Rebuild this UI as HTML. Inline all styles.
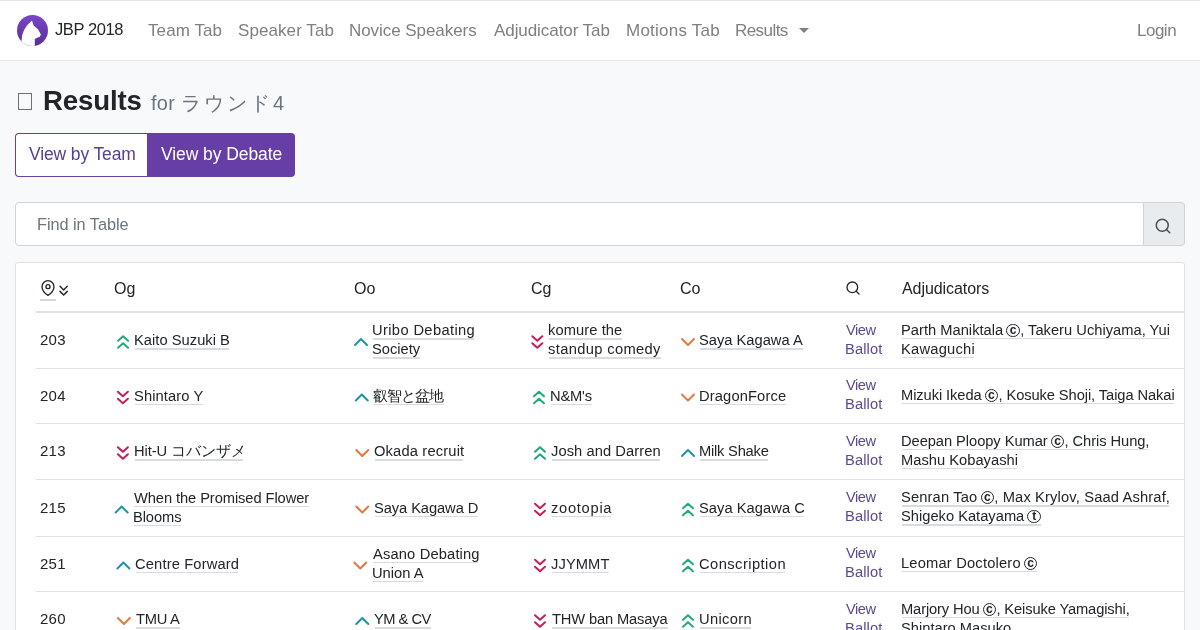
<!DOCTYPE html>
<html><head><meta charset="utf-8"><style>
html,body{margin:0;padding:0;}
body{width:1200px;height:630px;overflow:hidden;position:relative;background:#f8f9fa;font-family:"Liberation Sans", sans-serif;}
.t{position:absolute;white-space:nowrap;will-change:transform;}
.cc{display:inline-block;box-sizing:border-box;width:13.4px;height:13.4px;border:1.6px solid currentColor;border-radius:50%;font-size:12px;font-weight:700;line-height:10.2px;text-align:center;vertical-align:1px;margin:0 0.3px 0 3.2px;letter-spacing:0}
</style></head><body>
<div style="position:absolute;left:0px;top:0px;width:1200px;height:1px;background:#e3e3e3"></div><div style="position:absolute;left:0px;top:1px;width:1200px;height:59px;background:#fff"></div><div style="position:absolute;left:0px;top:60px;width:1200px;height:1px;background:#e6e6e6"></div><svg style="position:absolute;left:17px;top:14.5px;" width="31" height="31" viewBox="0 0 31 31" fill="none" stroke-linecap="round" stroke-linejoin="round"><defs><linearGradient id="lg" x1="0" y1="0" x2="0" y2="1"><stop offset="0" stop-color="#7b46c9"/><stop offset="1" stop-color="#5a2e98"/></linearGradient><clipPath id="cp"><circle cx="15.5" cy="15.5" r="15.5"/></clipPath></defs><circle cx="15.5" cy="15.5" r="15.5" fill="url(#lg)" stroke="none"/><path clip-path="url(#cp)" fill="#fff" stroke="none" d="M15 5.6 L16.6 10.6 L21 14.2 L23.9 19.4 L22.8 21.8 L19.6 23 L17.8 24 L17.8 32 L4 32 L4.4 26 Q5 13.5 15 5.6 Z"/></svg><div class="t" style="left:54.70px;top:18.80px;font-size:16.5px;line-height:20.62px;color:#212529;letter-spacing:-0.4px;">JBP 2018</div><div class="t" style="left:148.00px;top:19.80px;font-size:17px;line-height:21.25px;color:#7f7f7f;letter-spacing:0.086px;">Team Tab</div><div class="t" style="left:237.50px;top:19.80px;font-size:17px;line-height:21.25px;color:#7f7f7f;letter-spacing:0.08px;">Speaker Tab</div><div class="t" style="left:349.40px;top:19.80px;font-size:17px;line-height:21.25px;color:#7f7f7f;letter-spacing:-0.057px;">Novice Speakers</div><div class="t" style="left:493.80px;top:19.80px;font-size:17px;line-height:21.25px;color:#7f7f7f;letter-spacing:-0.072px;">Adjudicator Tab</div><div class="t" style="left:625.80px;top:19.80px;font-size:17px;line-height:21.25px;color:#7f7f7f;letter-spacing:0.24px;">Motions Tab</div><div class="t" style="left:735.00px;top:19.80px;font-size:17px;line-height:21.25px;color:#7f7f7f;letter-spacing:-0.566px;">Results</div><svg style="position:absolute;left:798.5px;top:28px;" width="10" height="5" viewBox="0 0 10 5" fill="none" stroke-linecap="round" stroke-linejoin="round"><path d="M0 0 L5 5 L10 0 Z" fill="#7f7f7f" stroke="none"/></svg><div class="t" style="left:1137.00px;top:20.20px;font-size:17px;line-height:21.25px;color:#7f7f7f;letter-spacing:-0.5px;">Login</div><div style="position:absolute;left:18px;top:93px;width:14px;height:17px;border:1px solid #707070;box-sizing:border-box"></div><div class="t" style="left:43.40px;top:84.00px;font-size:27.6px;line-height:34.5px;color:#212529;font-weight:700;letter-spacing:-0.134px;">Results</div><div class="t" style="left:150.70px;top:90.70px;font-size:20px;line-height:25.0px;color:#6c757d;letter-spacing:0.3px;">for</div><div class="t" style="left:181.00px;top:90.70px;font-size:20px;line-height:25.0px;color:#6c757d;letter-spacing:3.0px;">ラウンド4</div><div style="position:absolute;left:15px;top:133px;width:132px;height:44px;box-sizing:border-box;border:1px solid #663ea6;border-right:none;border-radius:4px 0 0 4px;background:#fff"></div><div style="position:absolute;left:147px;top:133px;width:148px;height:44px;background:#663ea6;border-radius:0 4px 4px 0"></div><div class="t" style="left:28.75px;top:143.50px;font-size:17.5px;line-height:21.88px;color:#573e93;letter-spacing:-0.136px;">View by Team</div><div class="t" style="left:161.00px;top:143.50px;font-size:17.5px;line-height:21.88px;color:#fff;letter-spacing:-0.077px;">View by Debate</div><div style="position:absolute;left:15px;top:202px;width:1170px;height:44px;box-sizing:border-box;border:1px solid #ced4da;border-radius:4px;background:#fff"></div><div style="position:absolute;left:1143px;top:202px;width:42px;height:44px;box-sizing:border-box;border:1px solid #ced4da;border-radius:0 4px 4px 0;background:#e9ecef"></div><div class="t" style="left:36.70px;top:214.00px;font-size:16.3px;line-height:20.38px;color:#6c757d;letter-spacing:-0.033px;">Find in Table</div><svg style="position:absolute;left:1153.5px;top:217.4px;" width="18" height="18" viewBox="0 0 24 24" fill="none" stroke-linecap="round" stroke-linejoin="round"><g stroke="#495057" stroke-width="2"><circle cx="11" cy="11" r="8"/><line x1="21" y1="21" x2="16.65" y2="16.65"/></g></svg><div style="position:absolute;left:15px;top:262px;width:1170px;height:400px;box-sizing:border-box;border:1px solid #dfe2e5;border-radius:3px;background:#fff"></div><div style="position:absolute;left:36px;top:311px;width:1148px;height:2px;background:#dee2e6"></div><svg style="position:absolute;left:40.1px;top:280px;" width="16" height="16" viewBox="0 0 24 24" fill="none" stroke-linecap="round" stroke-linejoin="round"><g stroke="#212529" stroke-width="2"><path d="M21 10c0 7-9 13-9 13s-9-6-9-13a9 9 0 0 1 18 0z"/><circle cx="12" cy="10" r="3"/></g></svg><div style="position:absolute;left:40px;top:299px;width:16px;height:2px;background:#d6d8db"></div><svg style="position:absolute;left:54.7px;top:281.6px;" width="17.3" height="17.3" viewBox="0 0 24 24" fill="none" stroke-linecap="round" stroke-linejoin="round"><g stroke="#212529" stroke-width="2"><polyline points="7 13 12 18 17 13"/><polyline points="7 6 12 11 17 6"/></g></svg><div class="t" style="left:114.40px;top:278.80px;font-size:16px;line-height:20.0px;color:#212529;">Og</div><div class="t" style="left:353.50px;top:278.80px;font-size:16px;line-height:20.0px;color:#212529;">Oo</div><div class="t" style="left:530.50px;top:278.80px;font-size:16px;line-height:20.0px;color:#212529;">Cg</div><div class="t" style="left:679.50px;top:278.80px;font-size:16px;line-height:20.0px;color:#212529;">Co</div><div class="t" style="left:902.20px;top:279.00px;font-size:16px;line-height:20.0px;color:#212529;letter-spacing:-0.073px;">Adjudicators</div><svg style="position:absolute;left:844.7px;top:279.7px;" width="16" height="16" viewBox="0 0 24 24" fill="none" stroke-linecap="round" stroke-linejoin="round"><g stroke="#212529" stroke-width="2"><circle cx="11" cy="11" r="8"/><line x1="21" y1="21" x2="16.65" y2="16.65"/></g></svg><div style="position:absolute;left:36px;top:368px;width:1148px;height:1px;background:#dee2e6"></div><div style="position:absolute;left:36px;top:423px;width:1148px;height:1px;background:#dee2e6"></div><div style="position:absolute;left:36px;top:479px;width:1148px;height:1px;background:#dee2e6"></div><div style="position:absolute;left:36px;top:536px;width:1148px;height:1px;background:#dee2e6"></div><div style="position:absolute;left:36px;top:591px;width:1148px;height:1px;background:#dee2e6"></div><div class="t" style="left:40.25px;top:331.00px;font-size:15px;line-height:18.75px;color:#212529;letter-spacing:0.25px;">203</div><div class="t" style="left:134.20px;top:331.00px;font-size:14.7px;line-height:18.38px;color:#212529;letter-spacing:0.03px;">Kaito Suzuki B</div><div style="position:absolute;left:135.20px;top:348.20px;width:94.20px;height:1.4px;background:#d9dbde"></div><div class="t" style="left:372.20px;top:321.00px;font-size:14.7px;line-height:18.38px;color:#212529;letter-spacing:0.369px;">Uribo Debating</div><div style="position:absolute;left:373.20px;top:338.20px;width:100.40px;height:1.4px;background:#d9dbde"></div><div class="t" style="left:372.20px;top:340.00px;font-size:14.7px;line-height:18.38px;color:#212529;">Society</div><div style="position:absolute;left:373.20px;top:357.20px;width:47.00px;height:1.4px;background:#d9dbde"></div><div class="t" style="left:548.30px;top:321.00px;font-size:14.7px;line-height:18.38px;color:#212529;letter-spacing:0.089px;">komure the</div><div style="position:absolute;left:549.30px;top:338.20px;width:72.90px;height:1.4px;background:#d9dbde"></div><div class="t" style="left:548.30px;top:340.00px;font-size:14.7px;line-height:18.38px;color:#212529;letter-spacing:0.354px;">standup comedy</div><div style="position:absolute;left:549.30px;top:357.20px;width:111.30px;height:1.4px;background:#d9dbde"></div><div class="t" style="left:699.00px;top:331.00px;font-size:14.7px;line-height:18.38px;color:#212529;">Saya Kagawa A</div><div style="position:absolute;left:700.00px;top:348.20px;width:102.50px;height:1.4px;background:#d9dbde"></div><div class="t" style="left:845.70px;top:320.60px;font-size:14.7px;line-height:18.38px;color:#5b4993;letter-spacing:-0.467px;">View</div><div class="t" style="left:844.70px;top:339.80px;font-size:14.7px;line-height:18.38px;color:#5b4993;letter-spacing:0.12px;">Ballot</div><div class="t" style="left:901.00px;top:320.60px;font-size:14.7px;line-height:18.38px;color:#212529;letter-spacing:0.013px;">Parth Maniktala<span class="cc">c</span>, Takeru Uchiyama, Yui</div><div style="position:absolute;left:902.00px;top:337.80px;width:266.75px;height:1.4px;background:#d9dbde"></div><div class="t" style="left:901.00px;top:339.60px;font-size:14.7px;line-height:18.38px;color:#212529;letter-spacing:0.224px;">Kawaguchi</div><div style="position:absolute;left:902.00px;top:356.80px;width:71.90px;height:1.4px;background:#d9dbde"></div><div class="t" style="left:40.25px;top:386.50px;font-size:15px;line-height:18.75px;color:#212529;letter-spacing:0.25px;">204</div><div class="t" style="left:134.00px;top:386.50px;font-size:14.7px;line-height:18.38px;color:#212529;letter-spacing:0.111px;">Shintaro Y</div><div style="position:absolute;left:135.00px;top:403.70px;width:68.00px;height:1.4px;background:#d9dbde"></div><div class="t" style="left:373.00px;top:386.50px;font-size:14.7px;line-height:18.38px;color:#212529;letter-spacing:-1.0px;">叡智と盆地</div><div style="position:absolute;left:374.00px;top:403.70px;width:70.00px;height:1.4px;background:#d9dbde"></div><div class="t" style="left:550.00px;top:386.50px;font-size:14.7px;line-height:18.38px;color:#212529;letter-spacing:-0.2px;">N&amp;M's</div><div style="position:absolute;left:551.00px;top:403.70px;width:40.60px;height:1.4px;background:#d9dbde"></div><div class="t" style="left:699.00px;top:386.50px;font-size:14.7px;line-height:18.38px;color:#212529;letter-spacing:0.14px;">DragonForce</div><div style="position:absolute;left:700.00px;top:403.70px;width:85.70px;height:1.4px;background:#d9dbde"></div><div class="t" style="left:845.70px;top:376.10px;font-size:14.7px;line-height:18.38px;color:#5b4993;letter-spacing:-0.467px;">View</div><div class="t" style="left:844.70px;top:395.30px;font-size:14.7px;line-height:18.38px;color:#5b4993;letter-spacing:0.12px;">Ballot</div><div class="t" style="left:901.00px;top:385.70px;font-size:14.7px;line-height:18.38px;color:#212529;letter-spacing:-0.089px;">Mizuki Ikeda<span class="cc">c</span>, Kosuke Shoji, Taiga Nakai</div><div style="position:absolute;left:902.00px;top:402.90px;width:271.75px;height:1.4px;background:#d9dbde"></div><div class="t" style="left:40.25px;top:442.00px;font-size:15px;line-height:18.75px;color:#212529;letter-spacing:0.25px;">213</div><div class="t" style="left:134.00px;top:442.00px;font-size:14.7px;line-height:18.38px;color:#212529;letter-spacing:-0.1px;">Hit-U コバンザメ</div><div style="position:absolute;left:135.00px;top:459.20px;width:108.00px;height:1.4px;background:#d9dbde"></div><div class="t" style="left:373.50px;top:442.00px;font-size:14.7px;line-height:18.38px;color:#212529;letter-spacing:0.167px;">Okada recruit</div><div style="position:absolute;left:374.50px;top:459.20px;width:88.50px;height:1.4px;background:#d9dbde"></div><div class="t" style="left:551.00px;top:442.00px;font-size:14.7px;line-height:18.38px;color:#212529;letter-spacing:0.072px;">Josh and Darren</div><div style="position:absolute;left:552.00px;top:459.20px;width:107.50px;height:1.4px;background:#d9dbde"></div><div class="t" style="left:699.00px;top:442.00px;font-size:14.7px;line-height:18.38px;color:#212529;letter-spacing:-0.222px;">Milk Shake</div><div style="position:absolute;left:700.00px;top:459.20px;width:68.00px;height:1.4px;background:#d9dbde"></div><div class="t" style="left:845.70px;top:431.60px;font-size:14.7px;line-height:18.38px;color:#5b4993;letter-spacing:-0.467px;">View</div><div class="t" style="left:844.70px;top:450.80px;font-size:14.7px;line-height:18.38px;color:#5b4993;letter-spacing:0.12px;">Ballot</div><div class="t" style="left:901.00px;top:431.60px;font-size:14.7px;line-height:18.38px;color:#212529;letter-spacing:-0.062px;">Deepan Ploopy Kumar<span class="cc">c</span>, Chris Hung,</div><div style="position:absolute;left:902.00px;top:448.80px;width:246.00px;height:1.4px;background:#d9dbde"></div><div class="t" style="left:901.00px;top:450.60px;font-size:14.7px;line-height:18.38px;color:#212529;letter-spacing:0.014px;">Mashu Kobayashi</div><div style="position:absolute;left:902.00px;top:467.80px;width:114.60px;height:1.4px;background:#d9dbde"></div><div class="t" style="left:40.25px;top:498.50px;font-size:15px;line-height:18.75px;color:#212529;letter-spacing:0.25px;">215</div><div class="t" style="left:133.75px;top:488.50px;font-size:14.7px;line-height:18.38px;color:#212529;letter-spacing:-0.087px;">When the Promised Flower</div><div style="position:absolute;left:133.75px;top:505.70px;width:175.00px;height:1.4px;background:#d9dbde"></div><div class="t" style="left:132.75px;top:507.50px;font-size:14.7px;line-height:18.38px;color:#212529;letter-spacing:-0.1px;">Blooms</div><div style="position:absolute;left:133.75px;top:524.70px;width:46.75px;height:1.4px;background:#d9dbde"></div><div class="t" style="left:373.50px;top:498.50px;font-size:14.7px;line-height:18.38px;color:#212529;letter-spacing:-0.083px;">Saya Kagawa D</div><div style="position:absolute;left:374.50px;top:515.70px;width:103.00px;height:1.4px;background:#d9dbde"></div><div class="t" style="left:551.00px;top:498.50px;font-size:14.7px;line-height:18.38px;color:#212529;letter-spacing:0.714px;">zootopia</div><div style="position:absolute;left:552.00px;top:515.70px;width:59.00px;height:1.4px;background:#d9dbde"></div><div class="t" style="left:699.00px;top:498.50px;font-size:14.7px;line-height:18.38px;color:#212529;letter-spacing:0.041px;">Saya Kagawa C</div><div style="position:absolute;left:700.00px;top:515.70px;width:103.75px;height:1.4px;background:#d9dbde"></div><div class="t" style="left:845.70px;top:488.10px;font-size:14.7px;line-height:18.38px;color:#5b4993;letter-spacing:-0.467px;">View</div><div class="t" style="left:844.70px;top:507.30px;font-size:14.7px;line-height:18.38px;color:#5b4993;letter-spacing:0.12px;">Ballot</div><div class="t" style="left:901.00px;top:488.10px;font-size:14.7px;line-height:18.38px;color:#212529;letter-spacing:0.15px;">Senran Tao<span class="cc">c</span>, Max Krylov, Saad Ashraf,</div><div style="position:absolute;left:902.00px;top:505.30px;width:266.70px;height:1.4px;background:#d9dbde"></div><div class="t" style="left:901.00px;top:507.10px;font-size:14.7px;line-height:18.38px;color:#212529;">Shigeko Katayama<span class="cc">t</span></div><div style="position:absolute;left:902.00px;top:524.30px;width:139.00px;height:1.4px;background:#d9dbde"></div><div class="t" style="left:40.25px;top:554.50px;font-size:15px;line-height:18.75px;color:#212529;letter-spacing:0.25px;">251</div><div class="t" style="left:134.50px;top:554.50px;font-size:14.7px;line-height:18.38px;color:#212529;letter-spacing:0.154px;">Centre Forward</div><div style="position:absolute;left:135.50px;top:571.70px;width:102.00px;height:1.4px;background:#d9dbde"></div><div class="t" style="left:372.50px;top:544.50px;font-size:14.7px;line-height:18.38px;color:#212529;letter-spacing:0.154px;">Asano Debating</div><div style="position:absolute;left:372.50px;top:561.70px;width:105.00px;height:1.4px;background:#d9dbde"></div><div class="t" style="left:371.50px;top:563.50px;font-size:14.7px;line-height:18.38px;color:#212529;">Union A</div><div style="position:absolute;left:372.50px;top:580.70px;width:50.00px;height:1.4px;background:#d9dbde"></div><div class="t" style="left:551.00px;top:554.50px;font-size:14.7px;line-height:18.38px;color:#212529;letter-spacing:0.1px;">JJYMMT</div><div style="position:absolute;left:552.00px;top:571.70px;width:56.75px;height:1.4px;background:#d9dbde"></div><div class="t" style="left:699.00px;top:554.50px;font-size:14.7px;line-height:18.38px;color:#212529;letter-spacing:0.454px;">Conscription</div><div style="position:absolute;left:700.00px;top:571.70px;width:84.50px;height:1.4px;background:#d9dbde"></div><div class="t" style="left:845.70px;top:544.10px;font-size:14.7px;line-height:18.38px;color:#5b4993;letter-spacing:-0.467px;">View</div><div class="t" style="left:844.70px;top:563.30px;font-size:14.7px;line-height:18.38px;color:#5b4993;letter-spacing:0.12px;">Ballot</div><div class="t" style="left:901.00px;top:553.70px;font-size:14.7px;line-height:18.38px;color:#212529;letter-spacing:0.188px;">Leomar Doctolero<span class="cc">c</span></div><div style="position:absolute;left:902.00px;top:570.90px;width:135.00px;height:1.4px;background:#d9dbde"></div><div class="t" style="left:40.25px;top:610.00px;font-size:15px;line-height:18.75px;color:#212529;letter-spacing:0.25px;">260</div><div class="t" style="left:136.00px;top:610.00px;font-size:14.7px;line-height:18.38px;color:#212529;letter-spacing:-0.25px;">TMU A</div><div style="position:absolute;left:136.00px;top:627.20px;width:44.00px;height:1.4px;background:#d9dbde"></div><div class="t" style="left:373.50px;top:610.00px;font-size:14.7px;line-height:18.38px;color:#212529;letter-spacing:-0.5px;">YM &amp; CV</div><div style="position:absolute;left:374.50px;top:627.20px;width:56.00px;height:1.4px;background:#d9dbde"></div><div class="t" style="left:552.00px;top:610.00px;font-size:14.7px;line-height:18.38px;color:#212529;letter-spacing:-0.153px;">THW ban Masaya</div><div style="position:absolute;left:552.00px;top:627.20px;width:115.50px;height:1.4px;background:#d9dbde"></div><div class="t" style="left:699.00px;top:610.00px;font-size:14.7px;line-height:18.38px;color:#212529;letter-spacing:0.333px;">Unicorn</div><div style="position:absolute;left:700.00px;top:627.20px;width:50.50px;height:1.4px;background:#d9dbde"></div><div class="t" style="left:845.70px;top:599.60px;font-size:14.7px;line-height:18.38px;color:#5b4993;letter-spacing:-0.467px;">View</div><div class="t" style="left:844.70px;top:618.80px;font-size:14.7px;line-height:18.38px;color:#5b4993;letter-spacing:0.12px;">Ballot</div><div class="t" style="left:901.00px;top:599.60px;font-size:14.7px;line-height:18.38px;color:#212529;letter-spacing:-0.129px;">Marjory Hou<span class="cc">c</span>, Keisuke Yamagishi,</div><div style="position:absolute;left:902.00px;top:616.80px;width:226.50px;height:1.4px;background:#d9dbde"></div><div class="t" style="left:901.00px;top:618.60px;font-size:14.7px;line-height:18.38px;color:#212529;">Shintaro Masuko</div><div style="position:absolute;left:902.00px;top:635.80px;width:109.00px;height:1.4px;background:#d9dbde"></div><svg style="position:absolute;left:0;top:0" width="1200" height="630" fill="none" stroke-width="2" stroke-linecap="round" stroke-linejoin="round"><g stroke="#22a97b"><polyline points="118.1 340.75 123.1 336.25 128.1 340.75"/><polyline points="118.1 347.75 123.1 343.25 128.1 347.75"/></g><g stroke="#1c96a2"><polyline points="355.0 345.0 361.0 339.0 367.0 345.0"/></g><g stroke="#c61e5a"><polyline points="532.3 336.25 537.3 340.75 542.3 336.25"/><polyline points="532.3 343.25 537.3 347.75 542.3 343.25"/></g><g stroke="#e8773c"><polyline points="682 339.0 688 345.0 694 339.0"/></g><g stroke="#c61e5a"><polyline points="117.9 391.75 122.9 396.25 127.9 391.75"/><polyline points="117.9 398.75 122.9 403.25 127.9 398.75"/></g><g stroke="#1c96a2"><polyline points="355.8 400.5 361.8 394.5 367.8 400.5"/></g><g stroke="#22a97b"><polyline points="534 396.25 539 391.75 544 396.25"/><polyline points="534 403.25 539 398.75 544 403.25"/></g><g stroke="#e8773c"><polyline points="682 394.5 688 400.5 694 394.5"/></g><g stroke="#c61e5a"><polyline points="117.9 447.25 122.9 451.75 127.9 447.25"/><polyline points="117.9 454.25 122.9 458.75 127.9 454.25"/></g><g stroke="#e8773c"><polyline points="356.3 450.0 362.3 456.0 368.3 450.0"/></g><g stroke="#22a97b"><polyline points="535 451.75 540 447.25 545 451.75"/><polyline points="535 458.75 540 454.25 545 458.75"/></g><g stroke="#1c96a2"><polyline points="682 456.0 688 450.0 694 456.0"/></g><g stroke="#1c96a2"><polyline points="115.65 512.5 121.65 506.5 127.65 512.5"/></g><g stroke="#e8773c"><polyline points="356.3 506.5 362.3 512.5 368.3 506.5"/></g><g stroke="#c61e5a"><polyline points="535 503.75 540 508.25 545 503.75"/><polyline points="535 510.75 540 515.25 545 510.75"/></g><g stroke="#22a97b"><polyline points="683 508.25 688 503.75 693 508.25"/><polyline points="683 515.25 688 510.75 693 515.25"/></g><g stroke="#1c96a2"><polyline points="117.4 568.5 123.4 562.5 129.4 568.5"/></g><g stroke="#e8773c"><polyline points="354.3 562.5 360.3 568.5 366.3 562.5"/></g><g stroke="#c61e5a"><polyline points="535 559.75 540 564.25 545 559.75"/><polyline points="535 566.75 540 571.25 545 566.75"/></g><g stroke="#22a97b"><polyline points="683 564.25 688 559.75 693 564.25"/><polyline points="683 571.25 688 566.75 693 571.25"/></g><g stroke="#e8773c"><polyline points="117.9 618.0 123.9 624.0 129.9 618.0"/></g><g stroke="#1c96a2"><polyline points="356.3 624.0 362.3 618.0 368.3 624.0"/></g><g stroke="#c61e5a"><polyline points="535 615.25 540 619.75 545 615.25"/><polyline points="535 622.25 540 626.75 545 622.25"/></g><g stroke="#22a97b"><polyline points="683 619.75 688 615.25 693 619.75"/><polyline points="683 626.75 688 622.25 693 626.75"/></g></svg>
</body></html>
